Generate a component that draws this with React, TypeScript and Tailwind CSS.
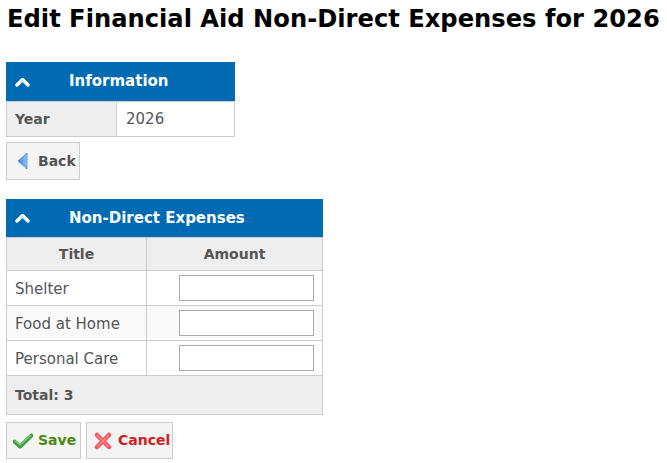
import React from "react";

function ChevronUp() {
  return (
    <svg width="15" height="10" viewBox="0 0 15 10" className="shrink-0">
      <path d="M2 8 L7.5 2.5 L13 8" fill="none" stroke="white" strokeWidth="3.4" strokeLinejoin="round" strokeLinecap="round" />
    </svg>
  );
}

function BackIcon() {
  return (
    <svg width="12" height="18" viewBox="0 0 12 18">
      <defs>
        <linearGradient id="bk" x1="0" y1="0" x2="1" y2="0">
          <stop offset="0" stopColor="#2f7fd6" />
          <stop offset="1" stopColor="#9cc6f0" />
        </linearGradient>
      </defs>
      <path d="M1 9 L10 1 L10 17 Z" fill="url(#bk)" stroke="#4b8fd8" strokeWidth="0.8" strokeLinejoin="round" />
    </svg>
  );
}

function CheckIcon() {
  return (
    <svg width="20" height="16" viewBox="0 0 20 16">
      <path d="M1.5 8.5 L7 13.5 L18.5 2.5" fill="none" stroke="#3e9e3e" strokeWidth="4" strokeLinecap="round" strokeLinejoin="round" />
      <path d="M2.5 8 L7 12 L17.5 2.5" fill="none" stroke="#7fcf6f" strokeWidth="1.5" strokeLinecap="round" strokeLinejoin="round" />
    </svg>
  );
}

function CrossIcon() {
  return (
    <svg width="18" height="18" viewBox="0 0 18 18">
      <path d="M3 3 L15 15 M15 3 L3 15" fill="none" stroke="#f0565a" strokeWidth="4.5" strokeLinecap="round" />
      <path d="M3.5 3.5 L14.5 14.5 M14.5 3.5 L3.5 14.5" fill="none" stroke="#ff8a8c" strokeWidth="1.2" strokeLinecap="round" />
    </svg>
  );
}

function PanelHeader({ title, h }: { title: string; h: string }) {
  return (
    <div className={`flex items-center bg-[#006bb3] pl-[9px] text-white ${h}`}>
      <ChevronUp />
      <div className="ml-[39px] text-[15px] font-bold">{title}</div>
    </div>
  );
}

const rows = ["Shelter", "Food at Home", "Personal Care"];

export default function App() {
  return (
    <div className="min-h-[463px] bg-white px-[6px] pt-[4px] text-[#555] font-['DejaVu_Sans',Verdana,sans-serif] text-[15px]">
      <h1 className="pl-[1px] text-[24.2px] font-bold leading-[30px] text-black">
        Edit Financial Aid Non-Direct Expenses for 2026
      </h1>

      <div className="mt-[28px] w-[229px]">
        <PanelHeader title="Information" h="h-[39px]" />
        <table className="w-full border-collapse">
          <tbody>
            <tr className="h-[35px]">
              <td className="w-[110px] border border-[#ccc] bg-[#eee] pl-[8px] text-[14px] font-bold">Year</td>
              <td className="border border-[#ccc] pl-[9px]">2026</td>
            </tr>
          </tbody>
        </table>
      </div>

      <button className="mt-[5px] flex h-[38px] w-[74px] items-center gap-[9px] border border-[#ccc] bg-[#f4f4f4] pl-[10px] text-[14px] font-bold text-[#555]">
        <BackIcon />
        <span>Back</span>
      </button>

      <div className="mt-[19px] w-[317px]">
        <PanelHeader title="Non-Direct Expenses" h="h-[38px]" />
        <table className="w-full border-collapse">
          <thead>
            <tr className="h-[33px] bg-[#eee] text-[14px]">
              <th className="w-[140px] border border-[#ccc] font-bold">Title</th>
              <th className="border border-[#ccc] font-bold">Amount</th>
            </tr>
          </thead>
          <tbody>
            {rows.map((r, i) => (
              <tr key={r} className={`h-[35px] ${i % 2 === 1 ? "bg-[#f9f9f9]" : "bg-white"}`}>
                <td className="border border-[#ccc] pl-[8px] pt-[2px]">{r}</td>
                <td className="border border-[#ccc] pr-[8px] text-right">
                  <input type="text" className="h-[26px] w-[135px] border border-[#aaa] bg-white align-middle" />
                </td>
              </tr>
            ))}
            <tr className="h-[39px] bg-[#eee]">
              <td colSpan={2} className="border border-[#ccc] pl-[8px] text-[14px] font-bold">Total: 3</td>
            </tr>
          </tbody>
        </table>
      </div>

      <div className="mt-[7px] flex gap-[5px] text-[14px]">
        <button className="flex h-[37px] w-[75px] items-center gap-[5px] border border-[#ccc] bg-[#f4f4f4] pl-[6px] font-bold text-[#4a8a10]">
          <CheckIcon />
          <span>Save</span>
        </button>
        <button className="flex h-[37px] w-[87px] items-center gap-[6px] border border-[#ccc] bg-[#f4f4f4] pl-[7px] font-bold text-[#d41c1c]">
          <CrossIcon />
          <span>Cancel</span>
        </button>
      </div>
    </div>
  );
}
